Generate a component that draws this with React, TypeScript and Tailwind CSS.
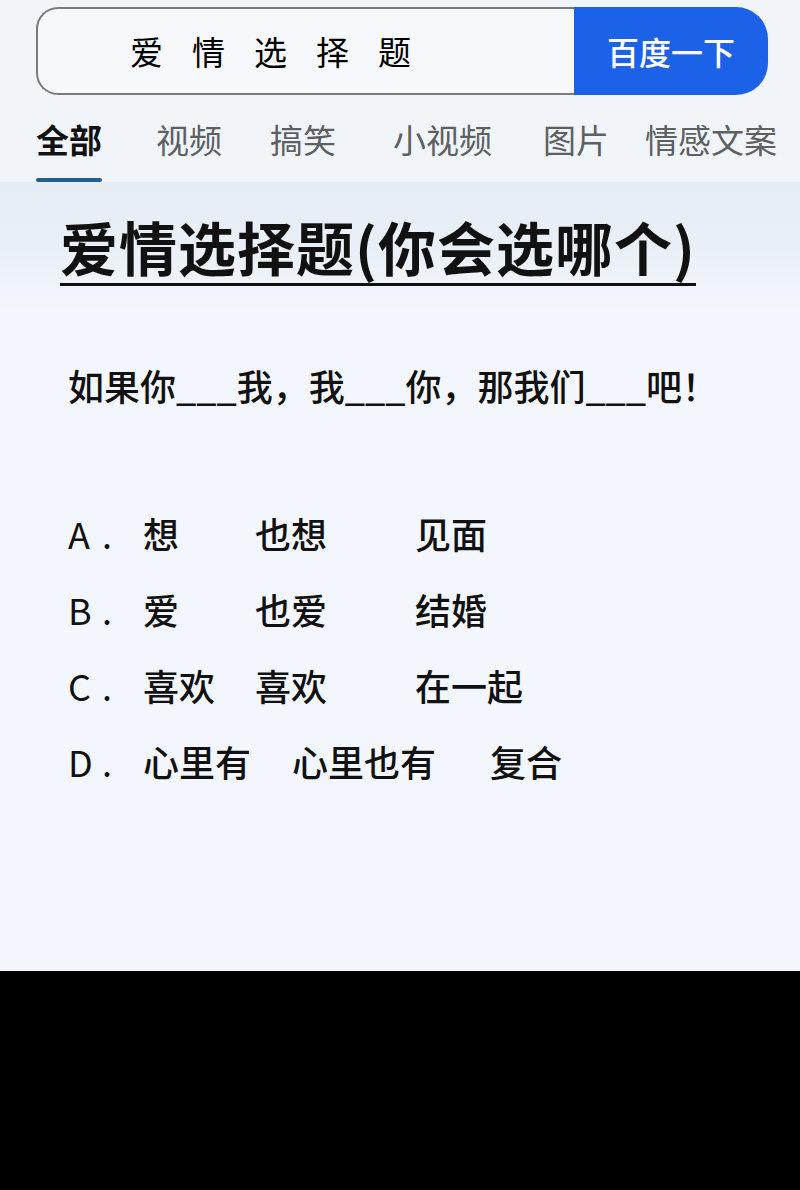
import React from 'react';

const FONT = { fontFamily: '"Noto Sans CJK SC", "Noto Sans", sans-serif' };

const tabs = [
  { label: '全部', ml: 'ml-0' },
  { label: '视频', ml: 'ml-[54px]' },
  { label: '搞笑', ml: 'ml-[48px]' },
  { label: '小视频', ml: 'ml-[57px]' },
  { label: '图片', ml: 'ml-[51px]' },
  { label: '情感文案', ml: 'ml-[36px]' },
];

type Option = { key: string; words: [string, string, string]; w1: string; w2: string };

const options: Option[] = [
  { key: 'A', words: ['想', '也想', '见面'], w1: 'w-[112px]', w2: 'w-[160px]' },
  { key: 'B', words: ['爱', '也爱', '结婚'], w1: 'w-[112px]', w2: 'w-[160px]' },
  { key: 'C', words: ['喜欢', '喜欢', '在一起'], w1: 'w-[112px]', w2: 'w-[160px]' },
  { key: 'D', words: ['心里有', '心里也有', '复合'], w1: 'w-[149px]', w2: 'w-[198px]' },
];

function SearchBar() {
  return (
    <div className="ml-[36px] mt-[6px] flex h-[88px] w-[732px]">
      <div className="flex flex-1 items-center rounded-l-[22px] border-2 border-r-0 border-[#7b7b7d] bg-[#f6f8fc] pl-[92px]">
        <span className="text-[33px] leading-none tracking-[29px] text-black">爱情选择题</span>
      </div>
      <div className="flex w-[194px] items-center justify-center rounded-r-[32px] bg-[#1c62e8]">
        <span className="text-[32px] font-medium leading-none text-white">百度一下</span>
      </div>
    </div>
  );
}

function Tabs() {
  return (
    <div className="ml-[36px] mt-[26px] flex whitespace-nowrap">
      {tabs.map((t, i) => (
        <div key={t.label} className={`flex flex-col items-stretch ${t.ml}`}>
          <span
            className={
              i === 0
                ? 'text-[33px] font-bold leading-[1.1] text-[#111]'
                : 'text-[33px] leading-[1.1] text-[#5d5f63]'
            }
          >
            {t.label}
          </span>
          {i === 0 && <div className="mt-[21px] h-[4px] rounded-full bg-[#245e8c]" />}
        </div>
      ))}
    </div>
  );
}

export default function App() {
  return (
    <div className="flex h-[1190px] w-[800px] flex-col bg-black" style={FONT}>
      <div className="h-[971px] bg-[#f3f7fd]">
        <div className="h-[182px] bg-[#f1f5fa] pt-px">
          <SearchBar />
          <Tabs />
        </div>

        <div className="h-[130px] bg-gradient-to-b from-[#e7edf5] via-[#e9eff6] to-[#f3f7fd] pl-[60px] pt-[35px]">
          <div className="inline-block border-b-[3px] border-[#111] pb-[8px]">
            <h1 className="text-[58px] font-bold leading-none tracking-[1px] text-[#111]">
              爱情选择题(你会选哪个)
            </h1>
          </div>
        </div>

        <p className="ml-[68px] mt-[55px] text-[36px] font-medium leading-none text-[#111]">
          如果你___我，我___你，那我们___吧！
        </p>

        <div className="ml-[68px] mt-[112px] flex flex-col gap-[40px]">
          {options.map((o) => (
            <div key={o.key} className="flex items-center text-[36px] font-medium leading-none text-[#111]">
              <span className="w-[34px] font-normal">{o.key}</span>
              <span className="w-[41px] font-normal">.</span>
              <span className={o.w1}>{o.words[0]}</span>
              <span className={o.w2}>{o.words[1]}</span>
              <span>{o.words[2]}</span>
            </div>
          ))}
        </div>
      </div>
    </div>
  );
}
